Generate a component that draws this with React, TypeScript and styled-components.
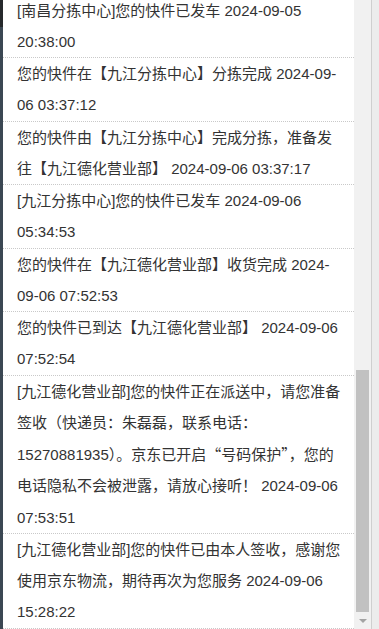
import React, { useLayoutEffect, useRef, useState } from "react";
import styled, { createGlobalStyle } from "styled-components";

const GlobalStyle = createGlobalStyle`
  html, body {
    margin: 0;
    padding: 0;
    height: 100%;
    overflow: hidden;
  }
  body {
    font-family: "Liberation Sans", Arial, "Noto Sans CJK SC", sans-serif;
  }
  #root {
    height: 100%;
  }
`;

const Page = styled.div`
  display: flex;
  height: 100vh;
  background: #ececec;
`;

// dark edge of the side menu peeking in on the left
const SideEdge = styled.div`
  width: 3px;
  flex-shrink: 0;
  background: linear-gradient(#26292c 0 27px, #3b4753 27px);
`;

const TrackList = styled.ul`
  flex: 1;
  min-width: 0;
  margin: 0;
  padding: 0;
  list-style: none;
  overflow-y: scroll;
  background: #fff;
  scrollbar-width: none;

  &::-webkit-scrollbar {
    display: none;
  }
`;

const TrackItem = styled.li`
  padding: 0 10px 0 14px;
  font-size: 15px;
  line-height: 31.25px;
  color: #333;
  border-bottom: 1px dotted #c9c9c9;
`;

// curly quotes come out full width in the original
const CjkQuote = styled.span`
  font-family: "Noto Sans CJK SC", sans-serif;
`;

// drawn scrollbar, the browser one is hidden in the screenshot
const ScrollRail = styled.div`
  width: 17px;
  flex-shrink: 0;
  display: flex;
  flex-direction: column;
  background: #f1f1f1;
`;

const RailTrack = styled.div`
  flex: 1;
  display: flex;
  flex-direction: column;
`;

const RailThumb = styled.div`
  margin: 0 2px;
  background: #c1c1c1;
`;

const RailButton = styled.div`
  height: 17px;
  display: flex;
  align-items: center;
  justify-content: center;
`;

const RightGutter = styled.div`
  width: 7px;
  flex-shrink: 0;
  border-left: 1px solid #cfcfcf;
  background: #ececec;
`;

interface TrackEvent {
  text: string;
  time: string;
}

const events: TrackEvent[] = [
  { text: "您提交了订单，请等待系统确认", time: "2024-09-04 10:12:33" },
  { text: "您的订单已付款成功，等待商家处理", time: "2024-09-04 10:12:40" },
  { text: "商家已接单，正在为您备货", time: "2024-09-04 10:13:15" },
  { text: "您的订单已进入库房，准备出库", time: "2024-09-04 10:15:02" },
  { text: "您的订单已经拣货完成", time: "2024-09-04 10:48:21" },
  { text: "您的订单已经打包完成", time: "2024-09-04 11:03:47" },
  { text: "您的订单待配送", time: "2024-09-04 11:05:10" },
  { text: "您的订单已交付京东物流", time: "2024-09-04 11:20:19" },
  { text: "京东快递员已揽收您的快件", time: "2024-09-04 11:58:26" },
  { text: "[南昌仓]您的快件已出库", time: "2024-09-04 12:41:05" },
  { text: "[南昌仓]您的快件已发车", time: "2024-09-04 14:02:36" },
  { text: "您的快件在【南昌分拣中心】收货完成", time: "2024-09-04 18:22:10" },
  { text: "您的快件在【南昌分拣中心】分拣完成", time: "2024-09-04 21:47:58" },
  { text: "您的快件由【南昌分拣中心】完成分拣，准备发往【九江分拣中心】", time: "2024-09-04 21:48:03" },
  { text: "[南昌分拣中心]您的快件已到达装车区", time: "2024-09-05 08:16:44" },
  { text: "[南昌分拣中心]您的快件正在等待装车", time: "2024-09-05 12:30:27" },
  { text: "[南昌分拣中心]您的快件已完成装车", time: "2024-09-05 19:55:12" },
  { text: "[南昌分拣中心]您的快件已封车", time: "2024-09-05 20:21:40" },
  { text: "[南昌分拣中心]您的快件已发出", time: "2024-09-05 20:30:18" },
  { text: "[南昌分拣中心]您的快件已发车", time: "2024-09-05 20:38:00" },
  { text: "您的快件在【九江分拣中心】分拣完成", time: "2024-09-06 03:37:12" },
  { text: "您的快件由【九江分拣中心】完成分拣，准备发往【九江德化营业部】", time: "2024-09-06 03:37:17" },
  { text: "[九江分拣中心]您的快件已发车", time: "2024-09-06 05:34:53" },
  { text: "您的快件在【九江德化营业部】收货完成", time: "2024-09-06 07:52:53" },
  { text: "您的快件已到达【九江德化营业部】", time: "2024-09-06 07:52:54" },
  {
    text: "[九江德化营业部]您的快件正在派送中，请您准备签收（快递员：朱磊磊，联系电话：15270881935）。京东已开启“号码保护”，您的电话隐私不会被泄露，请放心接听！",
    time: "2024-09-06 07:53:51",
  },
  { text: "[九江德化营业部]您的快件已由本人签收，感谢您使用京东物流，期待再次为您服务", time: "2024-09-06 15:28:22" },
];

// wrap “ and ” so they render with the CJK font
const renderText = (text: string) =>
  text.split(/([“”])/).map((part, i) =>
    part === "“" || part === "”" ? <CjkQuote key={i}>{part}</CjkQuote> : part
  );

export default function App() {
  const listRef = useRef<HTMLUListElement>(null);
  const trackRef = useRef<HTMLDivElement>(null);
  const [thumb, setThumb] = useState({ top: 0, height: 0 });

  // latest entries are shown: keep the list scrolled to the end
  useLayoutEffect(() => {
    const el = listRef.current;
    const track = trackRef.current;
    if (!el || !track) return;
    el.scrollTop = el.scrollHeight;
    const trackH = track.clientHeight;
    const height = Math.round((trackH * el.clientHeight) / el.scrollHeight);
    const maxScroll = el.scrollHeight - el.clientHeight;
    const top = maxScroll > 0 ? Math.round(((trackH - height) * el.scrollTop) / maxScroll) : 0;
    setThumb({ top, height });
  }, []);

  return (
    <>
      <GlobalStyle />
      <Page>
        <SideEdge />
        <TrackList ref={listRef}>
          {events.map((e) => (
            <TrackItem key={e.time + e.text}>
              {renderText(e.text)} {e.time}
            </TrackItem>
          ))}
        </TrackList>
        <ScrollRail>
          <RailTrack ref={trackRef}>
            <RailThumb style={{ marginTop: thumb.top, height: thumb.height }} />
          </RailTrack>
          <RailButton>
            <svg width="8" height="4" viewBox="0 0 8 4">
              <path d="M0 0h8L4 4z" fill="#a3a3a3" />
            </svg>
          </RailButton>
        </ScrollRail>
        <RightGutter />
      </Page>
    </>
  );
}
